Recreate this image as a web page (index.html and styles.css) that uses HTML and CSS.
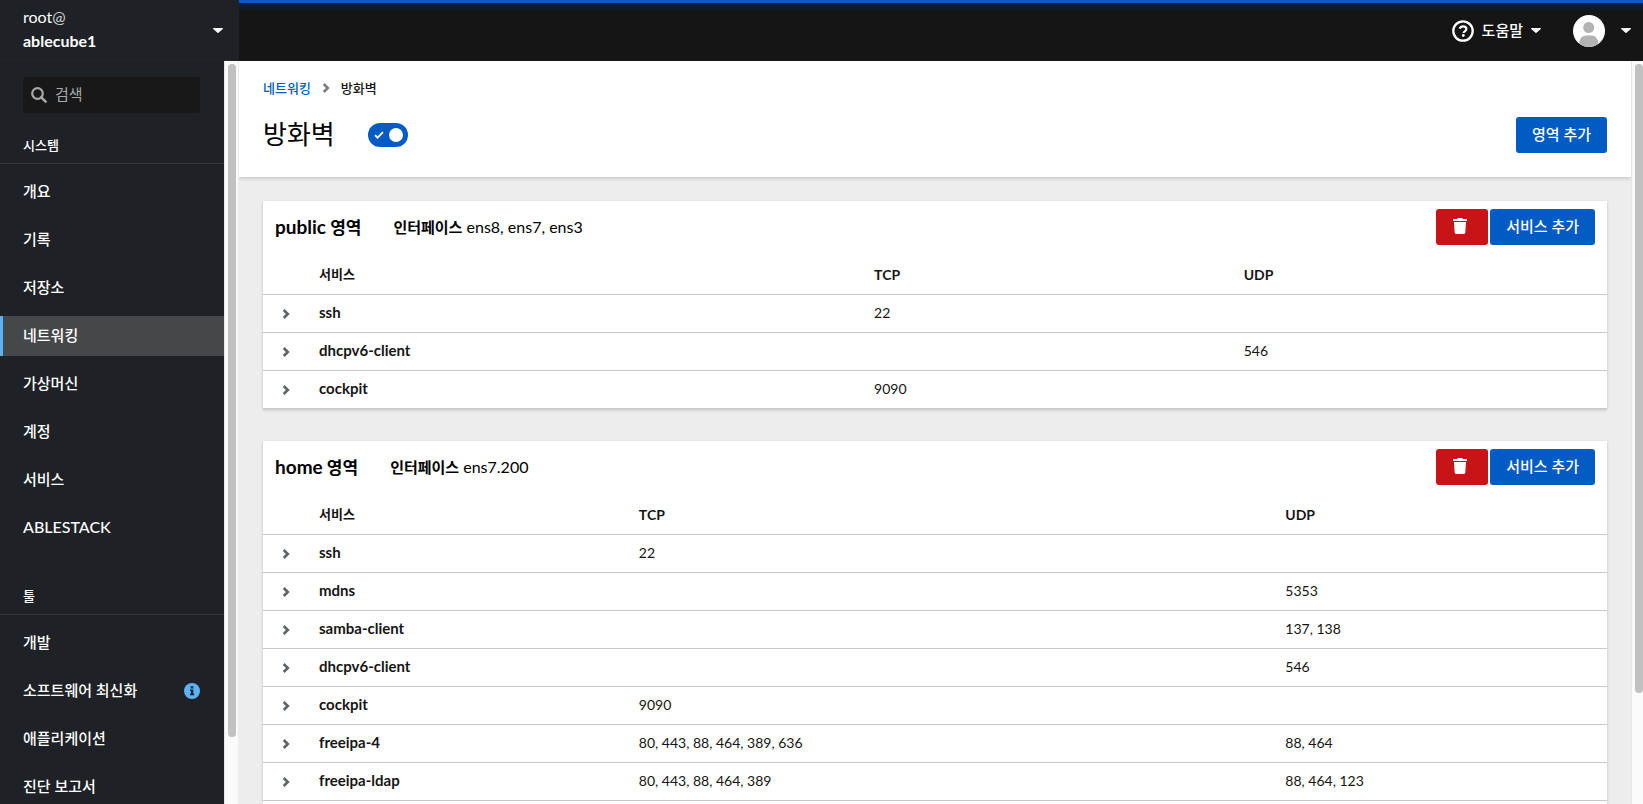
FILE: index.html
```html
<!DOCTYPE html>
<html lang="ko">
<head>
<meta charset="utf-8">
<meta name="viewport" content="width=device-width, initial-scale=1">
<title>방화벽</title>
<link rel="stylesheet" href="styles.css">
</head>
<body>
<svg class="sprite" aria-hidden="true">
  <symbol id="caret" viewBox="0 0 10 5"><path d="M.6 0h8.8c.5 0 .8.6.4 1L5.5 4.8a.7.7 0 0 1-1 0L.2 1C-.2.6.1 0 .6 0z"/></symbol>
  <symbol id="chevron" viewBox="0 0 8 12"><path d="M1.700 2L5.800 6 1.700 10" fill="none" stroke="currentColor" stroke-width="2.600"/></symbol>
  <symbol id="trash" viewBox="0 0 14 16"><path d="M13.500 1H9.750L9.450.42A.75.75 0 0 0 8.780 0H5.220a.75.75 0 0 0-.67.42L4.250 1H.5a.5.5 0 0 0-.5.5v1a.5.5 0 0 0 .5.5h13a.5.5 0 0 0 .5-.5v-1a.5.5 0 0 0-.5-.5zM1 4l.66 10.600A1.500 1.500 0 0 0 3.160 16h7.680a1.500 1.500 0 0 0 1.500-1.400L13 4z"/></symbol>
</svg>
<div class="app">
  <header class="masthead">
    <button class="host" type="button">
      <span class="host-name"><span>root<span class="at">@</span></span><strong>ablecube1</strong></span>
      <svg class="caret"><use href="#caret"/></svg>
    </button>
    <div class="topbar">
      <button class="top-button help" type="button">
        <svg class="help-icon" viewBox="0 0 22 22" aria-hidden="true"><circle cx="11" cy="11" r="9.700" fill="none" stroke="currentColor" stroke-width="2.300"/><path d="M7.600 8.600C8.200 7.200 9.400 6.300 11 6.300c1.900 0 3.400 1.100 3.400 2.800 0 2.300-2.800 2.300-2.800 3.800" fill="none" stroke="currentColor" stroke-width="2.200"/><circle cx="11.300" cy="15.500" r="1.400" fill="currentColor"/></svg>
        <span class="help-text">도움말</span>
        <svg class="caret"><use href="#caret"/></svg>
      </button>
      <button class="top-button user" type="button" aria-label="사용자 메뉴">
        <svg class="avatar" viewBox="0 0 32 32" aria-hidden="true"><clipPath id="disc"><circle cx="16" cy="16" r="16"/></clipPath><g clip-path="url(#disc)"><path fill="#fff" d="M0 0h32v32H0z"/><circle cx="15.700" cy="12.500" r="5.500" fill="#b3b3b3"/><path fill="#b3b3b3" d="M6.200 32v-3.500c0-4.500 3-8 7-8h5c4 0 7 3.500 7 8V32z"/></g></svg>
        <svg class="caret"><use href="#caret"/></svg>
      </button>
    </div>
  </header>
  <div class="body">
    <div class="side">
      <nav class="sidebar" aria-label="시스템 메뉴">
        <label class="search">
          <svg viewBox="0 0 16 16" aria-hidden="true"><circle cx="6.500" cy="6.500" r="5.300" fill="none" stroke="currentColor" stroke-width="2.200"/><path d="M10.300 10.300l4.300 4.300" stroke="currentColor" stroke-width="2.600" stroke-linecap="round"/></svg>
          <input type="search" placeholder="검색" aria-label="검색">
        </label>
        <section class="nav-group">
          <h2>시스템</h2>
          <ul>
            <li><a href="#">개요</a></li>
            <li><a href="#">기록</a></li>
            <li><a href="#">저장소</a></li>
            <li><a href="#" class="active" aria-current="page">네트워킹</a></li>
            <li><a href="#">가상머신</a></li>
            <li><a href="#">계정</a></li>
            <li><a href="#">서비스</a></li>
            <li><a href="#" class="latin">ABLESTACK</a></li>
          </ul>
        </section>
        <section class="nav-group">
          <h2>툴</h2>
          <ul>
            <li><a href="#">개발</a></li>
            <li><a href="#">소프트웨어 최신화
              <svg class="info" viewBox="0 0 16 16" aria-hidden="true"><circle cx="8" cy="8" r="8" fill="#5db1f5"/><path fill="#1e2125" d="M6.700 3.300h2.600v2.300H6.700zM6.100 6.600h3.200v4.200h.9v1.500H6v-1.500h.9V8.100h-.8z"/></svg></a></li>
            <li><a href="#">애플리케이션</a></li>
            <li><a href="#">진단 보고서</a></li>
          </ul>
        </section>
      </nav>
      <div class="track side-track" aria-hidden="true"><div class="thumb"></div></div>
    </div>
    <main class="content">
      <div class="page-head">
        <nav class="crumbs" aria-label="탐색 경로">
          <a href="#">네트워킹</a>
          <svg class="chevron"><use href="#chevron"/></svg>
          <span>방화벽</span>
        </nav>
        <div class="title-row">
          <h1>방화벽</h1>
          <label class="switch">
            <input type="checkbox" role="switch" checked aria-label="방화벽">
            <svg viewBox="0 0 10 8" aria-hidden="true"><path d="M1 4.200l2.500 2.500L9 1.200" fill="none" stroke="#fff" stroke-width="1.900"/></svg>
          </label>
          <button class="button primary" type="button">영역 추가</button>
        </div>
      </div>
      <div class="zones">
        <section class="card">
          <div class="card-head">
            <h2><span>public</span> 영역</h2>
            <p><strong>인터페이스</strong> ens8, ens7, ens3</p>
            <div class="actions">
              <button class="button danger" type="button" aria-label="삭제"><svg><use href="#trash"/></svg></button>
              <button class="button primary" type="button">서비스 추가</button>
            </div>
          </div>
          <table class="public">
            <colgroup><col class="toggle"><col class="service"><col class="tcp"><col></colgroup>
            <thead><tr><td></td><th scope="col" class="ko">서비스</th><th scope="col">TCP</th><th scope="col">UDP</th></tr></thead>
            <tbody>
              <tr><td class="expander"><button type="button" class="expand" aria-label="ssh"><svg class="chevron"><use href="#chevron"/></svg></button></td><th scope="row">ssh</th><td>22</td><td></td></tr>
              <tr><td class="expander"><button type="button" class="expand" aria-label="dhcpv6-client"><svg class="chevron"><use href="#chevron"/></svg></button></td><th scope="row">dhcpv6-client</th><td></td><td>546</td></tr>
              <tr><td class="expander"><button type="button" class="expand" aria-label="cockpit"><svg class="chevron"><use href="#chevron"/></svg></button></td><th scope="row">cockpit</th><td>9090</td><td></td></tr>
            </tbody>
          </table>
        </section>
        <section class="card">
          <div class="card-head">
            <h2><span>home</span> 영역</h2>
            <p><strong>인터페이스</strong> ens7.200</p>
            <div class="actions">
              <button class="button danger" type="button" aria-label="삭제"><svg><use href="#trash"/></svg></button>
              <button class="button primary" type="button">서비스 추가</button>
            </div>
          </div>
          <table class="home">
            <colgroup><col class="toggle"><col class="service"><col class="tcp"><col></colgroup>
            <thead><tr><td></td><th scope="col" class="ko">서비스</th><th scope="col">TCP</th><th scope="col">UDP</th></tr></thead>
            <tbody>
              <tr><td class="expander"><button type="button" class="expand" aria-label="ssh"><svg class="chevron"><use href="#chevron"/></svg></button></td><th scope="row">ssh</th><td>22</td><td></td></tr>
              <tr><td class="expander"><button type="button" class="expand" aria-label="mdns"><svg class="chevron"><use href="#chevron"/></svg></button></td><th scope="row">mdns</th><td></td><td>5353</td></tr>
              <tr><td class="expander"><button type="button" class="expand" aria-label="samba-client"><svg class="chevron"><use href="#chevron"/></svg></button></td><th scope="row">samba-client</th><td></td><td>137, 138</td></tr>
              <tr><td class="expander"><button type="button" class="expand" aria-label="dhcpv6-client"><svg class="chevron"><use href="#chevron"/></svg></button></td><th scope="row">dhcpv6-client</th><td></td><td>546</td></tr>
              <tr><td class="expander"><button type="button" class="expand" aria-label="cockpit"><svg class="chevron"><use href="#chevron"/></svg></button></td><th scope="row">cockpit</th><td>9090</td><td></td></tr>
              <tr><td class="expander"><button type="button" class="expand" aria-label="freeipa-4"><svg class="chevron"><use href="#chevron"/></svg></button></td><th scope="row">freeipa-4</th><td>80, 443, 88, 464, 389, 636</td><td>88, 464</td></tr>
              <tr><td class="expander"><button type="button" class="expand" aria-label="freeipa-ldap"><svg class="chevron"><use href="#chevron"/></svg></button></td><th scope="row">freeipa-ldap</th><td>80, 443, 88, 464, 389</td><td>88, 464, 123</td></tr>
            </tbody>
          </table>
        </section>
      </div>
    </main>
    <div class="track main-track" aria-hidden="true"><div class="thumb"></div></div>
  </div>
</div>
</body>
</html>
```
FILE: styles.css
```css
* { box-sizing: border-box; }
html, body { height: 100%; }
body {
  margin: 0;
  font: 16px/24px Lato, "Noto Sans CJK KR", sans-serif;
  color: #151515;
  background: #ededed;
}
h1, h2, p, ul { margin: 0; padding: 0; }
ul { list-style: none; }
button, input { font: inherit; color: inherit; }
button { border: 0; padding: 0; background: none; cursor: pointer; }
a { text-decoration: none; }
svg { display: block; flex: none; }
.sprite { position: absolute; width: 0; height: 0; }
.caret { width: 10px; height: 5px; fill: currentColor; }
.chevron { width: 8px; height: 12px; color: #5f6368; }

.app { display: flex; flex-direction: column; height: 100vh; overflow: hidden; }
.masthead { display: flex; flex: none; height: 61px; color: #fff; background: #151515; }
.host {
  display: flex;
  align-items: center;
  justify-content: space-between;
  width: 239px;
  padding: 0 16px 0 23px;
  text-align: left;
  background: #1e2125;
  border-bottom: 1px solid #24272a;
}
.host-name { display: flex; flex-direction: column; padding-bottom: 2px; }
.at { color: #d2d2d2; }
.topbar {
  display: flex;
  flex: 1;
  align-items: center;
  justify-content: flex-end;
  gap: 32px;
  padding-right: 12px;
  background: linear-gradient(#005cc4 3px, #0d2438 3px, #151515 11px);
}
.top-button { display: flex; align-items: center; font-size: 15px; font-weight: 500; }
.help { gap: 8px; }
.help-text { padding-bottom: 2px; }
.user { gap: 16px; }
.help-icon { width: 22px; height: 22px; }
.avatar { width: 32px; height: 32px; }

.body { display: flex; flex: 1; min-height: 0; }
.side { display: flex; width: 239px; }
.sidebar { flex: 1; overflow: hidden; padding-top: 16px; color: #fff; background: #1e2125; }
.search {
  display: flex;
  align-items: center;
  gap: 8px;
  height: 36px;
  margin: 0 24px 0 23px;
  padding: 0 8px;
  color: #a8a8a8;
  background: #181818;
  border-radius: 3px;
}
.search svg { width: 16px; height: 16px; }
.search input { width: 100%; min-width: 0; border: 0; padding: 0 0 2px; background: none; outline: 0; font-size: 15px; }
.search input::placeholder { color: #a8a8a8; opacity: 1; }
.nav-group { padding-top: 22px; }
.nav-group + .nav-group { padding-top: 30px; }
.nav-group h2 {
  padding: 0 23px 7px;
  font-size: 13px;
  line-height: 21px;
  font-weight: 500;
  border-bottom: 1px solid #35393c;
}
.nav-group li { padding: 8px 0 0; }
.nav-group ul { padding-bottom: 8px; }
.nav-group a {
  display: flex;
  align-items: center;
  justify-content: space-between;
  height: 40px;
  padding: 0 24px 3px 20px;
  color: #fff;
  font-size: 15px;
  font-weight: 500;
  border-left: 3px solid transparent;
}
.nav-group .latin { font-size: 16px; }
.nav-group .active { background: #45484b; border-color: #5db1f5; }
.info { width: 16px; height: 16px; margin-top: 3px; }

.track { flex: none; background: #fafafa; border-left: 1px solid #e6e6e6; padding-top: 3px; }
.thumb { width: 8px; background: #c1c1c1; border-radius: 4px; }
.side-track { width: 15px; padding-left: 3px; border-right: 1px solid #ececec; }
.side-track .thumb { height: 91%; }
.main-track { width: 12px; padding-left: 3px; }
.main-track .thumb { height: 85%; }

.content { flex: 1; min-width: 0; overflow: hidden; }
.page-head { padding: 15px 24px 24px; background: #fff; box-shadow: 0 1px 4px rgba(0, 0, 0, .2); position: relative; }
.crumbs { display: flex; align-items: center; gap: 11px; font-size: 13px; font-weight: 500; }
.crumbs a { color: #005cc4; }
.crumbs .chevron { color: #7d8083; }
.title-row { display: flex; align-items: center; margin-top: 17px; }
.title-row h1 { font-size: 26px; line-height: 34px; padding-bottom: 2px; font-weight: 400; margin-right: 33px; color: #000; }
.title-row .button { margin-left: auto; }
.switch {
  display: flex;
  align-items: center;
  justify-content: space-between;
  width: 40px;
  height: 24px;
  padding: 0 5px 0 6px;
  border-radius: 12px;
  background: #005cc4;
}
.switch input { order: 1; appearance: none; width: 14px; height: 14px; margin: 0; border-radius: 50%; background: #fff; }
.switch svg { width: 10px; height: 8px; }
.button {
  display: flex;
  align-items: center;
  justify-content: center;
  height: 36px;
  padding: 0 16px 2px;
  font-size: 15px;
  font-weight: 500;
  color: #fff;
  border-radius: 3px;
}
.primary { background: #005cc4; }
.danger { width: 52px; padding-right: 20px; background: #c91417; }
.danger svg { width: 14px; height: 16px; fill: #fff; }

.zones { display: grid; gap: 32px; padding: 24px; }
.card { background: #fff; box-shadow: 0 1px 3px rgba(0, 0, 0, .2); }
.card:last-child { padding-bottom: 24px; }
.card-head { display: flex; align-items: center; gap: 32px; padding: 8px 12px 12px; color: #000; }
.card-head h2 { font-size: 17px; font-weight: 700; }
.card-head h2 span { font-size: 19px; }
.card-head strong { font-size: 15px; }
.actions { display: flex; gap: 2px; margin-left: auto; }
table { width: 100%; table-layout: fixed; border-collapse: separate; border-spacing: 0; font-size: 14px; line-height: 21px; }
th, td { height: 38px; padding: 0 0 2px; text-align: left; border-bottom: 1px solid #c9c9c9; }
tbody th { font-size: 15px; }
.expander { padding: 0; }
.ko { font-size: 13px; }
.toggle { width: 56px; }
.public .service { width: 41.3%; }
.public .tcp { width: 27.5%; }
.home .service { width: 23.8%; }
.home .tcp { width: 48.1%; }
.expand { display: flex; align-items: center; padding-left: 19px; height: 37px; width: 56px; }
```
